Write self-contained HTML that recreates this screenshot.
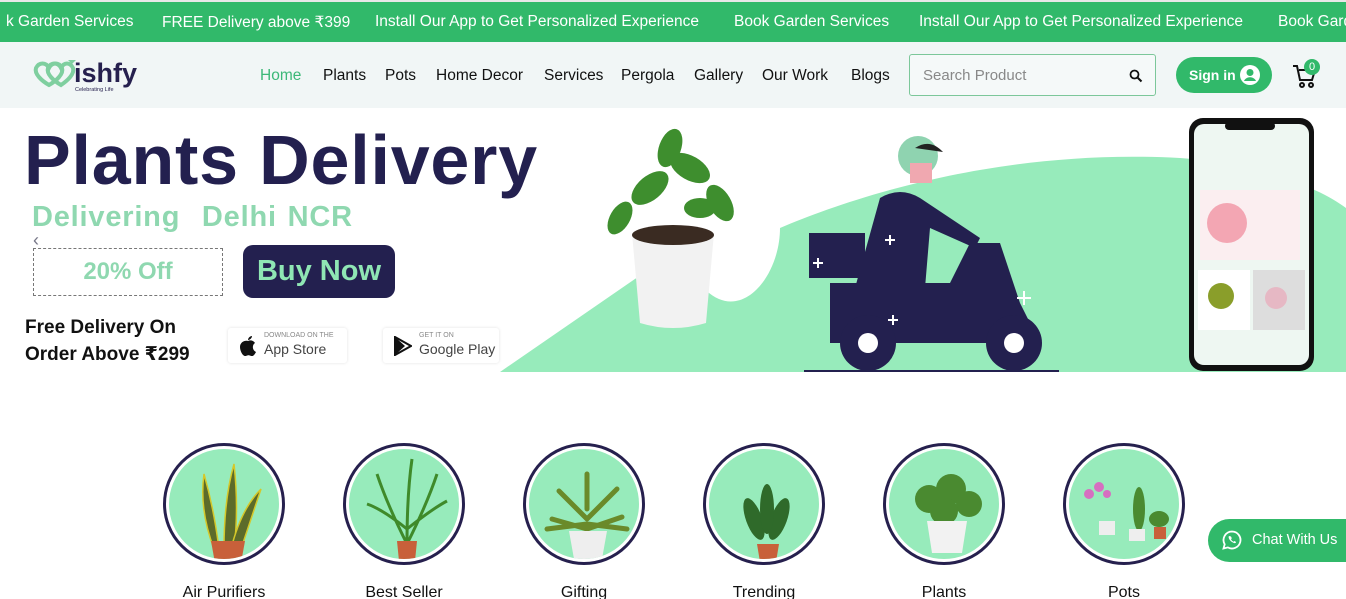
<!DOCTYPE html>
<html><head><meta charset="utf-8">
<style>
*{margin:0;padding:0;box-sizing:border-box}
html,body{overflow:hidden}
body{width:1346px;height:599px;overflow:hidden;background:#fff;font-family:"Liberation Sans","DejaVu Sans",sans-serif;position:relative}
.top{position:absolute;left:0;top:0;width:1346px;height:42px;background:#31b96a;border-top:2px solid #e8e8e8;color:#fff;font-size:15.5px;white-space:nowrap;overflow:hidden}
.top span{position:absolute;top:11px}
.nav{position:absolute;left:0;top:42px;width:1346px;height:66px;background:#f1f6f6}
.nav a{position:absolute;top:25px;font-size:15.5px;color:#111;text-decoration:none}
.search{position:absolute;left:909px;top:12px;width:247px;height:42px;border:1px solid #7cc79a;border-radius:3px;background:#f5f9f9}
.search span{position:absolute;left:13px;top:12px;color:#888;font-size:15px}
.signin{position:absolute;left:1176px;top:15px;width:96px;height:36px;border-radius:18px;background:#31b96a;color:#fff;font-weight:bold;font-size:14px}
.hero{position:absolute;left:0;top:108px;width:1346px;height:264px;overflow:hidden;background:#fff}
.h1{position:absolute;left:24px;top:12px;font-size:70px;font-weight:bold;color:#23204f;letter-spacing:0.8px}
.h2{position:absolute;left:32px;top:93px;font-size:29px;font-weight:bold;color:#8fd8b0;letter-spacing:0.8px;word-spacing:2px}
.off{position:absolute;left:33px;top:140px;width:190px;height:48px;border:1px dashed #777;color:#8fd8b0;font-size:24px;font-weight:bold;text-align:center;line-height:46px}
.buy{position:absolute;left:243px;top:137px;width:152px;height:53px;border-radius:10px;background:#23204f;color:#8fe6b4;font-size:29px;font-weight:bold;text-align:center;line-height:53px}
.free{position:absolute;left:25px;top:206px;font-size:19px;font-weight:bold;color:#111;line-height:27px}
.store{position:absolute;top:220px;height:35px;background:#fff;box-shadow:0 0 3px rgba(0,0,0,.12);border-radius:3px}
.store small{position:absolute;left:36px;top:4px;font-size:7px;color:#888}
.store b{position:absolute;left:36px;top:13px;font-size:14px;font-weight:normal;color:#444}
.cat{position:absolute;top:443px;width:122px;height:122px;border-radius:50%;border:3px solid #26204e;background:#fff}
.cat i{position:absolute;left:3px;top:3px;right:3px;bottom:3px;border-radius:50%;background:#97ebbb;display:block;overflow:hidden}
.lbl{position:absolute;top:584px;width:180px;text-align:center;font-size:16px;color:#111}
.chat{position:absolute;left:1208px;top:519px;width:138px;height:43px;border-radius:22px 0 0 22px;background:#31b96a;color:#fff;font-size:14.5px}
</style></head><body>
<div class="top">
<span style="left:6px">k Garden Services</span>
<span style="left:162px">FREE Delivery above ₹399</span>
<span style="left:375px">Install Our App to Get Personalized Experience</span>
<span style="left:734px">Book Garden Services</span>
<span style="left:919px">Install Our App to Get Personalized Experience</span>
<span style="left:1278px">Book Garden Services</span>
</div>
<div class="nav">
<svg style="position:absolute;left:30px;top:12px" width="115" height="42" viewBox="0 0 115 42">
<path d="M6 14c3-6 10-6 13 0 3-6 10-6 13 0 2 6-6 13-13 17-7-4-15-11-13-17z" fill="none" stroke="#7fcf9f" stroke-width="4"/>
<path d="M18 14c3-6 10-6 13 0 3-6 9-6 12 0 2 6-6 13-12 17-7-4-15-11-13-17z" fill="none" stroke="#7fcf9f" stroke-width="4"/>
<path d="M38 6l8 0-4 4z" fill="#7fcf9f"/>
<text x="44" y="28" font-family="Liberation Sans" font-weight="bold" font-size="27" fill="#26204e">ishfy</text>
<text x="45" y="37" font-family="Liberation Sans" font-size="5.5" fill="#26204e">Celebrating Life</text>
</svg>
<a style="left:260px;color:#3cb878">Home</a>
<a style="left:323px">Plants</a>
<a style="left:385px">Pots</a>
<a style="left:436px">Home Decor</a>
<a style="left:544px">Services</a>
<a style="left:621px">Pergola</a>
<a style="left:694px">Gallery</a>
<a style="left:762px">Our Work</a>
<a style="left:851px">Blogs</a>
<div class="search"><span>Search Product</span>
<svg style="position:absolute;left:219px;top:14px" width="14" height="14" viewBox="0 0 14 14"><circle cx="5.5" cy="5.5" r="4" fill="none" stroke="#111" stroke-width="1.8"/><path d="M8.5 8.5l4 4" stroke="#111" stroke-width="2"/></svg></div>
<div class="signin"><span style="position:absolute;left:13px;top:10px">Sign in</span>
<svg style="position:absolute;left:64px;top:8px" width="20" height="20" viewBox="0 0 20 20"><circle cx="10" cy="10" r="10" fill="#fff"/><circle cx="10" cy="7.5" r="3.5" fill="#31b96a"/><path d="M4 16c2-5 10-5 12 0" fill="#31b96a"/></svg></div>
<svg style="position:absolute;left:1292px;top:20px" width="26" height="28" viewBox="0 0 26 28"><path d="M1 4h4l3 14h12l3-10H7" fill="none" stroke="#111" stroke-width="2"/><circle cx="10" cy="23" r="2" fill="none" stroke="#111" stroke-width="2"/><circle cx="19" cy="23" r="2" fill="none" stroke="#111" stroke-width="2"/></svg>
<div style="position:absolute;left:1304px;top:17px;width:16px;height:16px;border-radius:50%;background:#31b96a;color:#fff;font-size:11px;text-align:center;line-height:16px">0</div>
</div>
<div class="hero">
<svg style="position:absolute;left:0;top:0" width="1346" height="264" viewBox="0 0 1346 264">
<path d="M500 264 L680 140 C720 240 780 180 780 120 C850 90 1000 40 1180 50 C1260 56 1320 80 1346 100 L1346 264Z" fill="#97ebbb"/>
<rect x="804" y="262" width="255" height="2" fill="#23204f"/>
<path d="M632 125 h82 l-8 90 q-33 10 -66 0z" fill="#f2f2f2"/>
<ellipse cx="673" cy="127" rx="41" ry="10" fill="#3a2b22"/>
<g fill="#3e8e2e"><ellipse cx="650" cy="80" rx="22" ry="12" transform="rotate(-40 650 80)"/><ellipse cx="690" cy="60" rx="22" ry="12" transform="rotate(30 690 60)"/><ellipse cx="670" cy="40" rx="20" ry="11" transform="rotate(-70 670 40)"/><ellipse cx="720" cy="95" rx="20" ry="11" transform="rotate(60 720 95)"/><ellipse cx="620" cy="110" rx="18" ry="10" transform="rotate(-60 620 110)"/><ellipse cx="700" cy="100" rx="16" ry="10"/></g>
<circle cx="918" cy="48" r="20" fill="#8fd3b0"/>
<path d="M915 40 q15-10 28 4z" fill="#222"/>
<rect x="910" y="55" width="22" height="20" fill="#f0a8b0"/>
<path d="M880 90 q20-12 40 0 l60 40 -5 10 -45-20 -5 60 -70 0z" fill="#23204f"/>
<rect x="809" y="125" width="56" height="45" fill="#23204f"/>
<path d="M830 175 h120 l20-40 30 0 20 60 20 40 h-210z" fill="#23204f"/>
<circle cx="868" cy="235" r="28" fill="#23204f"/><circle cx="868" cy="235" r="10" fill="#fff"/>
<circle cx="1014" cy="235" r="28" fill="#23204f"/><circle cx="1014" cy="235" r="10" fill="#fff"/>
<g stroke="#fff" stroke-width="2"><path d="M885 132h10M890 127v10M813 155h10M818 150v10M888 212h10M893 207v10M1017 190h14M1024 183v14"/></g>
<rect x="1189" y="10" width="125" height="253" rx="14" fill="#111"/>
<rect x="1194" y="16" width="115" height="241" rx="10" fill="#eef7f2"/>
<rect x="1225" y="14" width="50" height="8" rx="4" fill="#111"/>
<rect x="1200" y="82" width="100" height="70" fill="#fbeef0"/><circle cx="1227" cy="115" r="20" fill="#f3a6b3"/>
<rect x="1198" y="162" width="52" height="60" fill="#fff"/><rect x="1253" y="162" width="52" height="60" fill="#ddd"/>
<circle cx="1221" cy="188" r="13" fill="#8a9e2a"/><circle cx="1276" cy="190" r="11" fill="#e6b8c4"/>
</svg>
<div class="h1">Plants Delivery</div>
<div class="h2">Delivering&nbsp; Delhi NCR</div>
<div style="position:absolute;left:33px;top:122px;color:#778;font-size:18px">‹</div>
<div class="off">20% Off</div>
<div class="buy">Buy Now</div>
<div class="free">Free Delivery On<br>Order Above ₹299</div>
<div class="store" style="left:228px;width:119px">
<svg style="position:absolute;left:11px;top:7px" width="18" height="21" viewBox="0 0 18 21"><path d="M9 6c2-1 5-1 7 2-3 2-3 7 1 9-1 2-3 5-5 4-2-1-3-1-5 0-3 1-6-5-6-9 0-5 5-7 8-6z" fill="#111"/><path d="M9 5c0-2 2-4 4-4 0 2-2 4-4 4z" fill="#111"/></svg>
<small>DOWNLOAD ON THE</small><b>App Store</b></div>
<div class="store" style="left:383px;width:116px">
<svg style="position:absolute;left:11px;top:8px" width="18" height="20" viewBox="0 0 18 20"><path d="M1 1l16 9-16 9z" fill="none" stroke="#111" stroke-width="2"/><path d="M1 1l10 9-10 9" fill="#111"/></svg>
<small>GET IT ON</small><b>Google Play</b></div>
</div>
<div class="cat" style="left:163px"><i><svg width="116" height="116"><g fill="#5c6b2a" stroke="#d4c82a" stroke-width="1.5"><path d="M45 100 q-15-40 -10-75 q10 35 15 75z"/><path d="M55 100 q0-50 10-85 q5 45 0 85z"/><path d="M62 100 q10-40 30-60 q-10 30 -20 60z"/></g><path d="M42 92h34l-4 22h-26z" fill="#c8603a"/></svg></i></div>
<div class="cat" style="left:343px"><i><svg width="116" height="116"><g stroke="#3f8a2a" stroke-width="3" fill="none"><path d="M58 95 q-20-40 -30-70"/><path d="M58 95 q0-50 5-85"/><path d="M58 95 q20-40 30-70"/><path d="M58 80 q-25-20 -40-25"/><path d="M58 80 q25-20 40-28"/></g><path d="M48 92h20l-2 20h-16z" fill="#c8603a"/></svg></i></div>
<div class="cat" style="left:523px"><i><svg width="116" height="116"><g stroke="#6a8a2a" stroke-width="5" stroke-linecap="round"><path d="M58 80l-35-10M58 80l35-12M58 70l-28-28M58 70l30-30M58 60l0-35M58 75l-40 5M58 75l40 5"/></g><path d="M40 82h38l-5 28h-28z" fill="#eee"/></svg></i></div>
<div class="cat" style="left:703px"><i><svg width="116" height="116"><g fill="#2f6a2a"><ellipse cx="45" cy="70" rx="8" ry="22" transform="rotate(-20 45 70)"/><ellipse cx="70" cy="70" rx="8" ry="22" transform="rotate(20 70 70)"/><ellipse cx="58" cy="60" rx="7" ry="25"/></g><path d="M48 95h22l-3 18h-16z" fill="#c8603a"/></svg></i></div>
<div class="cat" style="left:883px"><i><svg width="116" height="116"><g fill="#4a8a30"><circle cx="40" cy="50" r="14"/><circle cx="62" cy="40" r="15"/><circle cx="80" cy="55" r="13"/><circle cx="55" cy="62" r="14"/></g><path d="M38 72h40l-5 32h-30z" fill="#f2f2f2"/></svg></i></div>
<div class="cat" style="left:1063px"><i><svg width="116" height="116"><g fill="#d66fc0"><circle cx="20" cy="45" r="5"/><circle cx="30" cy="38" r="5"/><circle cx="38" cy="45" r="4"/></g><g fill="#4a8a30"><ellipse cx="70" cy="60" rx="6" ry="22"/><ellipse cx="90" cy="70" rx="10" ry="8"/></g><g fill="#eee"><rect x="30" y="72" width="16" height="14"/><rect x="60" y="80" width="16" height="12"/></g><rect x="85" y="78" width="12" height="12" fill="#c8603a"/></svg></i></div>
<div class="lbl" style="left:134px">Air Purifiers</div>
<div class="lbl" style="left:314px">Best Seller</div>
<div class="lbl" style="left:494px">Gifting</div>
<div class="lbl" style="left:674px">Trending</div>
<div class="lbl" style="left:854px">Plants</div>
<div class="lbl" style="left:1034px">Pots</div>
<div class="chat">
<svg style="position:absolute;left:14px;top:11px" width="20" height="20" viewBox="0 0 20 20"><path d="M10 1.5a8.5 8.5 0 0 0-7.3 12.8L1.5 18.5l4.3-1.1A8.5 8.5 0 1 0 10 1.5z" fill="none" stroke="#fff" stroke-width="1.8"/><path d="M7 6c-1 1 0 4 3 6s4 1 4 0l-1.5-1-1 .8c-1-.5-2-1.5-2.5-2.5l.8-1L9 6.5z" fill="#fff"/></svg>
<span style="position:absolute;left:44px;top:13px">Chat With Us</span></div>
</body></html>
